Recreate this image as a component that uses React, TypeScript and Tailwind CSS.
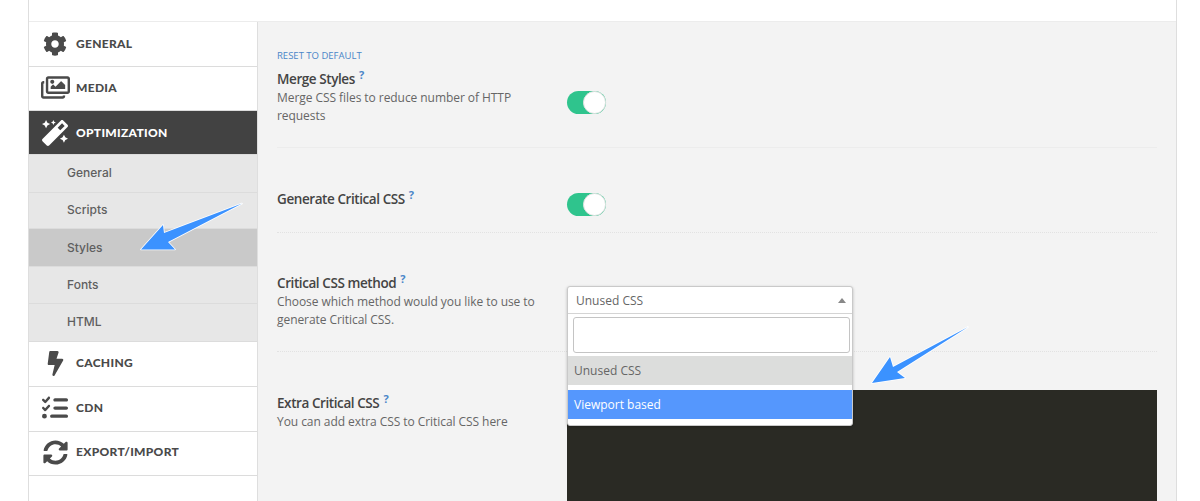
import React from "react";
import { FaCog, FaRegImages, FaMagic, FaBolt, FaSyncAlt } from "react-icons/fa";
import { FaListCheck } from "react-icons/fa6";

const sans = "font-['Open_Sans','Noto_Sans',sans-serif]";

function Top({ icon, label, active, h = "h-[44px]", lift = "" }: { icon: React.ReactNode; label: string; active?: boolean; h?: string; lift?: string }) {
  return (
    <div className={`${h} ${lift} flex items-center border-b border-[#dcdcdc] ${active ? "bg-[#424242] text-white" : "bg-white text-[#4a4a4a]"}`}>
      <div className="w-[47px] flex justify-center items-center pl-[5px] shrink-0">{icon}</div>
      <span className="font-['Lato',sans-serif] font-black text-[12px] tracking-[0.3px] whitespace-nowrap">{label}</span>
    </div>
  );
}

function Sub({ label, active, h, lift = "" }: { label: string; active?: boolean; h: string; lift?: string }) {
  return (
    <div className={`${h} ${lift} flex items-center pl-[38px] border-b border-[#dcdcdc] text-[12px] font-medium text-[#5f5f5f] font-['Inter',sans-serif] ${active ? "bg-[#c9c9c9]" : "bg-[#e7e7e7]"}`}>
      {label}
    </div>
  );
}

function Label({ text, desc }: { text: string; desc?: React.ReactNode }) {
  return (
    <div className="w-[290px] shrink-0">
      <div className="text-[13.5px] leading-[18px] font-semibold tracking-[-0.42px] text-[#444]">
        {text}
        <sup className="text-[11px] font-bold text-[#4a86c8] ml-[4px] top-[-5px] relative align-baseline">?</sup>
      </div>
      {desc && <div className="text-[12px] leading-[18px] tracking-[-0.06px] text-[#666] mt-[1px]">{desc}</div>}
    </div>
  );
}

function Toggle() {
  return (
    <div className="relative w-[39px] h-[23px] rounded-full bg-[#2fc48d]">
      <div className="absolute right-0 top-0 w-[23px] h-[23px] rounded-full bg-white border border-[#e2e2e2]" />
    </div>
  );
}

export default function App() {
  return (
    <div className={`relative h-[501px] w-[1200px] overflow-hidden bg-white ${sans}`}>
      <div className="ml-[28px] w-[1149px] h-[501px] border-x border-[#dedede] flex flex-col">
        <div className="h-[22px] shrink-0 bg-white border-b border-[#ececec]" />
        <div className="flex flex-1 min-h-0">
          <div className="w-[229px] shrink-0 bg-white border-r border-[#dedede]">
            <Top label="GENERAL" h="h-[45px]" icon={<FaCog className="text-[24px]" />} />
            <Top label="MEDIA" lift="pb-[2px]" icon={<FaRegImages className="text-[29px]" />} />
            <Top label="OPTIMIZATION" active icon={<FaMagic className="text-[26px]" />} />
            <Sub label="General" h="h-[38px]" lift="pb-[2px]" />
            <Sub label="Scripts" h="h-[36px]" lift="pb-[2px]" />
            <Sub label="Styles" active h="h-[38px]" />
            <Sub label="Fonts" h="h-[37px]" />
            <Sub label="HTML" h="h-[38px]" lift="pb-[2px]" />
            <Top label="CACHING" h="h-[45px]" lift="pb-[2px]" icon={<FaBolt className="text-[25px]" />} />
            <Top label="CDN" h="h-[45px]" lift="pb-[2px]" icon={<FaListCheck className="text-[26px]" />} />
            <Top label="EXPORT/IMPORT" h="h-[44px]" lift="pb-[3px]" icon={<FaSyncAlt className="text-[25px]" />} />
          </div>
          <div className="flex-1 bg-[#f3f3f3] pl-[19px] pr-[19px] min-w-0">
            <div className="h-[126px] border-b border-[#ececec]">
              <div className="pt-[27px] text-[9.5px] leading-[13px] text-[#4a86c8]">RESET TO DEFAULT</div>
              <div className="flex mt-[8px]">
                <Label text="Merge Styles" desc={<>Merge CSS files to reduce number of HTTP<br />requests</>} />
                <div className="pt-[21px]"><Toggle /></div>
              </div>
            </div>
            <div className="h-[85px] border-b border-dotted border-[#e2e2e2] flex items-start">
              <div className="pt-[42px]"><Label text="Generate Critical CSS" /></div>
              <div className="pt-[45px]"><Toggle /></div>
            </div>
            <div className="h-[119px] border-b border-dotted border-[#e2e2e2] flex">
              <div className="pt-[41px]">
                <Label text="Critical CSS method" desc={<>Choose which method would you like to use to<br />generate Critical CSS.</>} />
              </div>
              <div className="relative w-[286px]">
                <div className="absolute left-0 top-[53px] w-[286px] h-[140px] z-10 rounded-[3px] bg-white border border-[#c9c9c9] shadow-[0_1px_3px_rgba(0,0,0,0.25)] overflow-hidden">
                  <div className="h-[27px] flex items-center justify-between pl-[8px] pr-[5px] pt-[1px] text-[12px] text-[#666] border-b border-[#d4d4d4]">
                    <span>Unused CSS</span>
                    <span className="w-0 h-0 border-x-[4px] border-x-transparent border-b-[5px] border-b-[#888] mr-[1px]" />
                  </div>
                  <div className="px-[5px] pt-[3px] pb-[4px]">
                    <div className="h-[36px] w-[277px] rounded-[3px] border border-[#c4c4c4] bg-white" />
                  </div>
                  <div className="h-[29px] -mt-px bg-[#dcdddc] flex items-center pl-[6px] text-[12px] text-[#666]">Unused CSS</div>
                  <div className="h-[5px]" />
                  <div className="h-[29px] bg-[#5597fd] flex items-center pl-[6px] pt-[1px] text-[12px] text-white">Viewport based</div>
                </div>
              </div>
            </div>
            <div className="flex h-[149px]">
              <div className="pt-[42px]">
                <Label text="Extra Critical CSS" desc="You can add extra CSS to Critical CSS here" />
              </div>
              <div className="mt-[38px] flex-1 bg-[#2a2a24]" />
            </div>
          </div>
        </div>
      </div>
      <svg className="absolute left-[138px] top-[200px] w-[108px] h-[52px]" viewBox="138 200 108 52">
        <path d="M242 203.5 L164 233 L163 225 L141 249.5 L175 249.5 L168 242 Z" fill="#3b92ff" stroke="#ffffff" strokeWidth="1.6" strokeLinejoin="round" paintOrder="stroke" />
      </svg>
      <svg className="absolute left-[870px] top-[324px] w-[100px] h-[62px]" viewBox="870 324 100 62">
        <path d="M968 327 L893 367 L890 357 L872 383 L905 378 L897 372 Z" fill="#3b92ff" stroke="#ffffff" strokeWidth="1.6" strokeLinejoin="round" paintOrder="stroke" />
      </svg>
    </div>
  );
}
